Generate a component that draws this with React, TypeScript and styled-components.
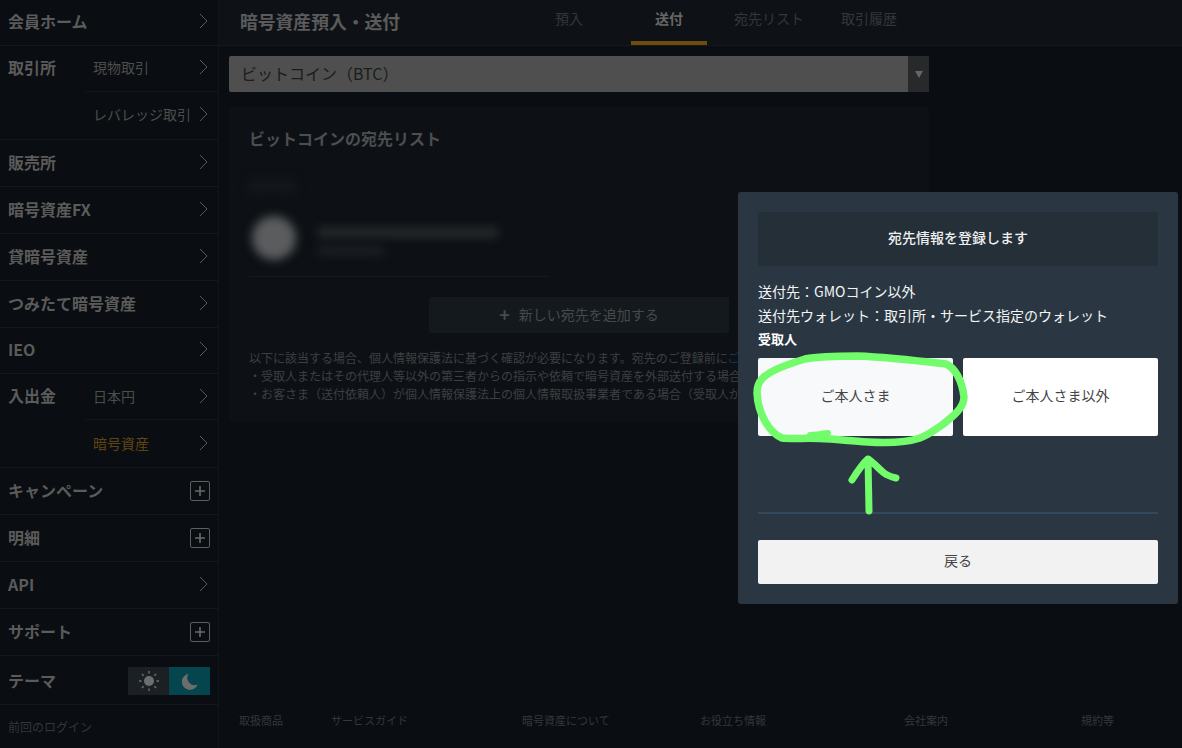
import React from "react";
import styled, { createGlobalStyle } from "styled-components";

const GlobalStyle = createGlobalStyle`
  html, body {
    margin: 0;
    padding: 0;
    background: #0a0d11;
    font-family: "Noto Sans CJK JP", "Liberation Sans", sans-serif;
  }
  * {
    box-sizing: border-box;
  }
`;

const Chevron = () => (
  <ChevronIcon width="9" height="16" viewBox="0 0 9 16">
    <polyline points="1,1 8,8 1,15" fill="none" stroke="#565a5e" strokeWidth="1" />
  </ChevronIcon>
);

const PlusBox = () => (
  <PlusFrame>
    <svg width="12" height="12" viewBox="0 0 12 12">
      <path d="M6 1v10M1 6h10" stroke="#6a6a6a" strokeWidth="1.6" />
    </svg>
  </PlusFrame>
);

const SunIcon = () => (
  <svg width="22" height="22" viewBox="0 0 22 22">
    <circle cx="11" cy="11" r="5" fill="#6e6e6e" />
    <path
      d="M11 1v2.500M11 18.500v2.500M1 11h2.500M18.500 11h2.500M3.900 3.900l1.800 1.800M16.300 16.300l1.800 1.800M3.900 18.100l1.800-1.800M16.300 5.700l1.800-1.800"
      stroke="#6e6e6e"
      strokeWidth="1.4"
    />
  </svg>
);

const MoonIcon = () => (
  <svg width="17" height="17" viewBox="0 0 20 20">
    <path d="M9 1a9.500 9.500 0 1 0 10.500 12.500 8.500 8.500 0 0 1-10.500-12.500z" fill="#6d6d6d" />
  </svg>
);

const simpleRows: { label: string; icon: "chevron" | "plus" }[][] = [
  [
    { label: "販売所", icon: "chevron" },
    { label: "暗号資産FX", icon: "chevron" },
    { label: "貸暗号資産", icon: "chevron" },
    { label: "つみたて暗号資産", icon: "chevron" },
    { label: "IEO", icon: "chevron" },
  ],
  [
    { label: "キャンペーン", icon: "plus" },
    { label: "明細", icon: "plus" },
    { label: "API", icon: "chevron" },
    { label: "サポート", icon: "plus" },
  ],
];

const tabs = ["預入", "送付", "宛先リスト", "取引履歴"];
const footerLinks = ["取扱商品", "サービスガイド", "暗号資産について", "お役立ち情報", "会社案内", "規約等"];

const NavRow = ({ label, icon }: { label: string; icon: "chevron" | "plus" }) => (
  <Row>
    <RowLabel>{label}</RowLabel>
    {icon === "plus" ? <PlusBox /> : <Chevron />}
  </Row>
);

const NavGroup = ({ label, items }: { label: string; items: { text: string; active?: boolean }[] }) => (
  <Group>
    <GroupLabel>{label}</GroupLabel>
    <SubList>
      {items.map((item) => (
        <SubRow key={item.text} $active={item.active}>
          <span>{item.text}</span>
          <Chevron />
        </SubRow>
      ))}
    </SubList>
  </Group>
);

const App: React.FC = () => {
  return (
    <Page>
      <GlobalStyle />
      <Sidebar>
        <FirstRow>
          <RowLabel>会員ホーム</RowLabel>
          <Chevron />
        </FirstRow>
        <NavGroup label="取引所" items={[{ text: "現物取引" }, { text: "レバレッジ取引" }]} />
        {simpleRows[0].map((r) => (
          <NavRow key={r.label} {...r} />
        ))}
        <NavGroup label="入出金" items={[{ text: "日本円" }, { text: "暗号資産", active: true }]} />
        {simpleRows[1].map((r) => (
          <NavRow key={r.label} {...r} />
        ))}
        <ThemeRow>
          <RowLabel>テーマ</RowLabel>
          <ThemeToggle>
            <ThemeOption>
              <SunIcon />
            </ThemeOption>
            <ThemeOption $on>
              <MoonIcon />
            </ThemeOption>
          </ThemeToggle>
        </ThemeRow>
        <LastLogin>前回のログイン</LastLogin>
      </Sidebar>

      <Main>
        <Header>
          <Title>暗号資産預入・送付</Title>
          <Tabs>
            {tabs.map((t) => (
              <Tab key={t} $active={t === "送付"}>
                {t}
              </Tab>
            ))}
          </Tabs>
        </Header>

        <Content>
          <Select>
            <SelectValue>ビットコイン（BTC）</SelectValue>
            <SelectArrow>
              <svg width="8" height="8" viewBox="0 0 8 8">
                <polygon points="0,1 8,1 4,8" fill="#666" />
              </svg>
            </SelectArrow>
          </Select>

          <Card>
            <CardTitle>ビットコインの宛先リスト</CardTitle>
            <BlurredLabel />
            <AddressRow>
              <BlurredAvatar />
              <AddressLines>
                <BlurredLine $width={180} $tone="#292b2e" />
                <BlurredLine $width={66} $tone="#1d2023" />
              </AddressLines>
            </AddressRow>
            <AddWrap>
              <AddButton>
                <AddPlus>+</AddPlus>新しい宛先を追加する
              </AddButton>
            </AddWrap>
            <Notice>
              <p>
                以下に該当する場合、個人情報保護法に基づく確認が必要になります。宛先のご登録前に
                <NoticeLink>ご確認ください。</NoticeLink>
              </p>
              <p>・受取人またはその代理人等以外の第三者からの指示や依頼で暗号資産を外部送付する場合</p>
              <p>・お客さま（送付依頼人）が個人情報保護法上の個人情報取扱事業者である場合（受取人が</p>
            </Notice>
          </Card>
        </Content>

        <Footer>
          {footerLinks.map((l) => (
            <FooterLink key={l}>{l}</FooterLink>
          ))}
        </Footer>
      </Main>

      <Modal>
        <ModalHead>宛先情報を登録します</ModalHead>
        <InfoBlock>
          <InfoLine>送付先：GMOコイン以外</InfoLine>
          <InfoLine>送付先ウォレット：取引所・サービス指定のウォレット</InfoLine>
          <InfoStrong>受取人</InfoStrong>
        </InfoBlock>
        <Choices>
          <Choice $hover>ご本人さま</Choice>
          <Choice>ご本人さま以外</Choice>
        </Choices>
        <Divider />
        <BackButton>戻る</BackButton>
      </Modal>

      {/* hand drawn marker strokes on top of the dialog */}
      <Marker width="1182" height="748" viewBox="0 0 1182 748">
        <path
          d="M757 393 C757 380 765 375 775 370 C785 365 795 362 805 359 C820 356 840 356 858 356 C885 357 920 361 946 364 C955 368 962 380 964 397 C964 407 955 415 942 425 C935 430 928 435 920 438 C905 443 885 443 868 442 C850 441 835 439 820 438.500 C805 438 790 439 782 438 C770 433 758 415 757 393 Z"
          fill="none"
          stroke="#72fb6a"
          strokeWidth="7.500"
          strokeLinejoin="round"
        />
        <path d="M810 435 C816 435 822 434 828 433" fill="none" stroke="#72fb6a" strokeWidth="6" strokeLinecap="round" />
        <path
          d="M869 511 L868 459 M852 480 C857 472 862 464 868 459 C874 463 878 468 884 473 C888 476 892 477 896 478"
          fill="none"
          stroke="#72fb6a"
          strokeWidth="7"
          strokeLinecap="round"
          strokeLinejoin="round"
        />
      </Marker>
    </Page>
  );
};

const Page = styled.div`
  position: relative;
  display: flex;
  width: 1182px;
  height: 748px;
  overflow: hidden;
  background: #0a0d11;
`;

const Sidebar = styled.nav`
  flex: 0 0 219px;
  display: flex;
  flex-direction: column;
  border-right: 1px solid #12161a;
  background: #0a0d11;
`;

const Row = styled.div`
  display: flex;
  align-items: center;
  justify-content: space-between;
  height: 47px;
  padding: 0 9px 2px 8px;
  border-bottom: 1px solid #14181c;
`;

const FirstRow = styled(Row)`
  height: 46px;
`;

const ThemeRow = styled(Row)`
  height: 49px;
  padding-right: 8px;
  padding-bottom: 0;
`;

const RowLabel = styled.span`
  font-size: 16px;
  line-height: 24px;
  font-weight: 700;
  color: #5b5b5b;
  white-space: nowrap;
`;

const ChevronIcon = styled.svg`
  flex: none;
  margin-right: 1px;
`;

const PlusFrame = styled.span`
  display: flex;
  align-items: center;
  justify-content: center;
  width: 20px;
  height: 20px;
  margin: 2px -1px 0 0;
  border: 1px solid #5f5f5f;
  border-radius: 2px;
`;

const Group = styled.div`
  display: flex;
  border-bottom: 1px solid #14181c;
`;

const GroupLabel = styled(RowLabel)`
  flex: 0 0 85px;
  padding: 9px 0 0 8px;
`;

const SubList = styled.div`
  flex: 1;
  display: flex;
  flex-direction: column;
`;

const SubRow = styled.div<{ $active?: boolean }>`
  display: flex;
  align-items: center;
  justify-content: space-between;
  height: 47px;
  padding: 0 9px 2px 8px;
  font-size: 14px;
  line-height: 20px;
  color: ${(p) => (p.$active ? "#5f4512" : "#4d4d4d")};
  white-space: nowrap;

  &:first-child {
    height: 46px;
    border-bottom: 1px solid #14181c;
  }
`;

const ThemeToggle = styled.div`
  display: flex;
  width: 82px;
  height: 28px;
  margin-top: 2px;
`;

const ThemeOption = styled.div<{ $on?: boolean }>`
  flex: 1;
  display: flex;
  align-items: center;
  justify-content: center;
  background: ${(p) => (p.$on ? "#05454d" : "#1b2025")};
`;

const LastLogin = styled.div`
  padding: 13px 8px;
  font-size: 12px;
  color: #33363a;
  white-space: nowrap;
`;

const Main = styled.main`
  flex: 1;
  min-width: 0;
  display: flex;
  flex-direction: column;
`;

const Header = styled.header`
  display: flex;
  align-items: stretch;
  height: 46px;
  padding-left: 21px;
  border-bottom: 1px solid #14181c;
  background: #0e1216;
`;

const Title = styled.h1`
  flex: 0 0 291px;
  margin: 0;
  padding-bottom: 4px;
  align-self: center;
  font-size: 17.800px;
  line-height: 26px;
  font-weight: 700;
  color: #5b5b5b;
  white-space: nowrap;
`;

const Tabs = styled.div`
  display: flex;
  gap: 24px;
`;

const Tab = styled.div<{ $active?: boolean }>`
  display: flex;
  align-items: center;
  justify-content: center;
  width: 76px;
  height: 45px;
  padding-bottom: 5px;
  font-size: 14px;
  font-weight: ${(p) => (p.$active ? 700 : 400)};
  color: ${(p) => (p.$active ? "#666666" : "#33373b")};
  border-bottom: 4px solid ${(p) => (p.$active ? "#6f4c0b" : "transparent")};
  white-space: nowrap;
`;

const Content = styled.div`
  flex: 1;
  display: flex;
  flex-direction: column;
  gap: 15px;
  width: 700px;
  margin: 10px 0 0 10px;
`;

const Select = styled.div`
  display: flex;
  height: 36px;
  border-radius: 2px;
  overflow: hidden;
  background: #4f4f4f;
`;

const SelectValue = styled.div`
  flex: 1;
  padding: 0 0 2px 12px;
  display: flex;
  align-items: center;
  font-size: 16px;
  color: #1c1c1c;
`;

const SelectArrow = styled.div`
  flex: 0 0 21px;
  display: flex;
  align-items: center;
  justify-content: center;
  background: #28292b;
`;

const Card = styled.section`
  height: 315px;
  padding: 19px 20px 0;
  background: #0d1115;
  border-radius: 2px;
  overflow: hidden;
`;

const CardTitle = styled.h2`
  margin: 0;
  font-size: 16px;
  line-height: 24px;
  font-weight: 700;
  color: #4c4e50;
`;

const BlurredLabel = styled.div`
  width: 46px;
  height: 12px;
  margin-top: 30px;
  background: #15181b;
  filter: blur(5px);
`;

const AddressRow = styled.div`
  display: flex;
  align-items: center;
  gap: 22px;
  width: 300px;
  height: 72px;
  margin-top: 13px;
  padding: 0 0 6px;
  border-bottom: 1px solid #15191d;
`;

const BlurredAvatar = styled.div`
  width: 44px;
  height: 44px;
  margin-left: 3px;
  border-radius: 50%;
  background: #5a5c5e;
  filter: blur(5px);
`;

const AddressLines = styled.div`
  display: flex;
  flex-direction: column;
  gap: 9px;
  margin-top: 8px;
`;

const BlurredLine = styled.div<{ $width: number; $tone: string }>`
  width: ${(p) => p.$width}px;
  height: 9px;
  background: ${(p) => p.$tone};
  filter: blur(5px);
`;

const AddWrap = styled.div`
  display: flex;
  justify-content: center;
  margin-top: 20px;
`;

const AddButton = styled.div`
  display: flex;
  align-items: center;
  justify-content: center;
  width: 300px;
  height: 36px;
  padding-bottom: 2px;
  background: #14191d;
  border-radius: 2px;
  font-size: 14px;
  color: #47494c;
`;

const AddPlus = styled.span`
  margin-right: 9px;
  font-size: 18px;
  font-weight: 700;
  line-height: 1;
`;

const Notice = styled.div`
  margin-top: 16px;
  font-size: 12px;
  line-height: 18px;
  color: #3d4043;
  white-space: nowrap;

  p {
    margin: 0;
  }
`;

const NoticeLink = styled.span`
  color: #123a5c;
`;

const Footer = styled.footer`
  display: grid;
  grid-template-columns: 92px 191px 178px 204px 177px auto;
  align-items: center;
  height: 48px;
  padding: 0 0 8px 20px;
  margin-top: auto;
`;

const FooterLink = styled.span`
  font-size: 11px;
  color: #35383c;
  white-space: nowrap;
`;

const Modal = styled.div`
  position: absolute;
  left: 738px;
  top: 192px;
  width: 440px;
  height: 412px;
  padding: 20px;
  background: #2a3742;
  border-radius: 3px;
`;

const ModalHead = styled.div`
  display: flex;
  align-items: center;
  justify-content: center;
  height: 54px;
  padding-bottom: 4px;
  background: #242f38;
  font-size: 14px;
  font-weight: 500;
  color: #eef0f2;
`;

const InfoBlock = styled.div`
  margin-top: 13px;
  color: #f2f4f5;
  font-size: 14px;
  line-height: 24px;
`;

const InfoLine = styled.div`
  white-space: nowrap;
`;

const InfoStrong = styled.div`
  font-size: 13px;
  line-height: 24px;
  font-weight: 700;
  color: #ffffff;
`;

const Choices = styled.div`
  display: grid;
  grid-template-columns: 1fr 1fr;
  gap: 10px;
  margin-top: 7px;
`;

const Choice = styled.div<{ $hover?: boolean }>`
  display: flex;
  align-items: center;
  justify-content: center;
  height: 78px;
  padding-bottom: 4px;
  border-radius: 2px;
  background: ${(p) => (p.$hover ? "#f8f9fb" : "#ffffff")};
  font-size: 14px;
  color: #444444;
`;

const Divider = styled.hr`
  margin: 76px 0 26px;
  border: 0;
  border-top: 2px solid #34495c;
`;

const BackButton = styled.div`
  display: flex;
  align-items: center;
  justify-content: center;
  height: 44px;
  padding-bottom: 4px;
  border-radius: 2px;
  background: #f2f2f2;
  font-size: 14px;
  color: #444444;
`;

const Marker = styled.svg`
  position: absolute;
  left: 0;
  top: 0;
  pointer-events: none;
`;

export default App;
